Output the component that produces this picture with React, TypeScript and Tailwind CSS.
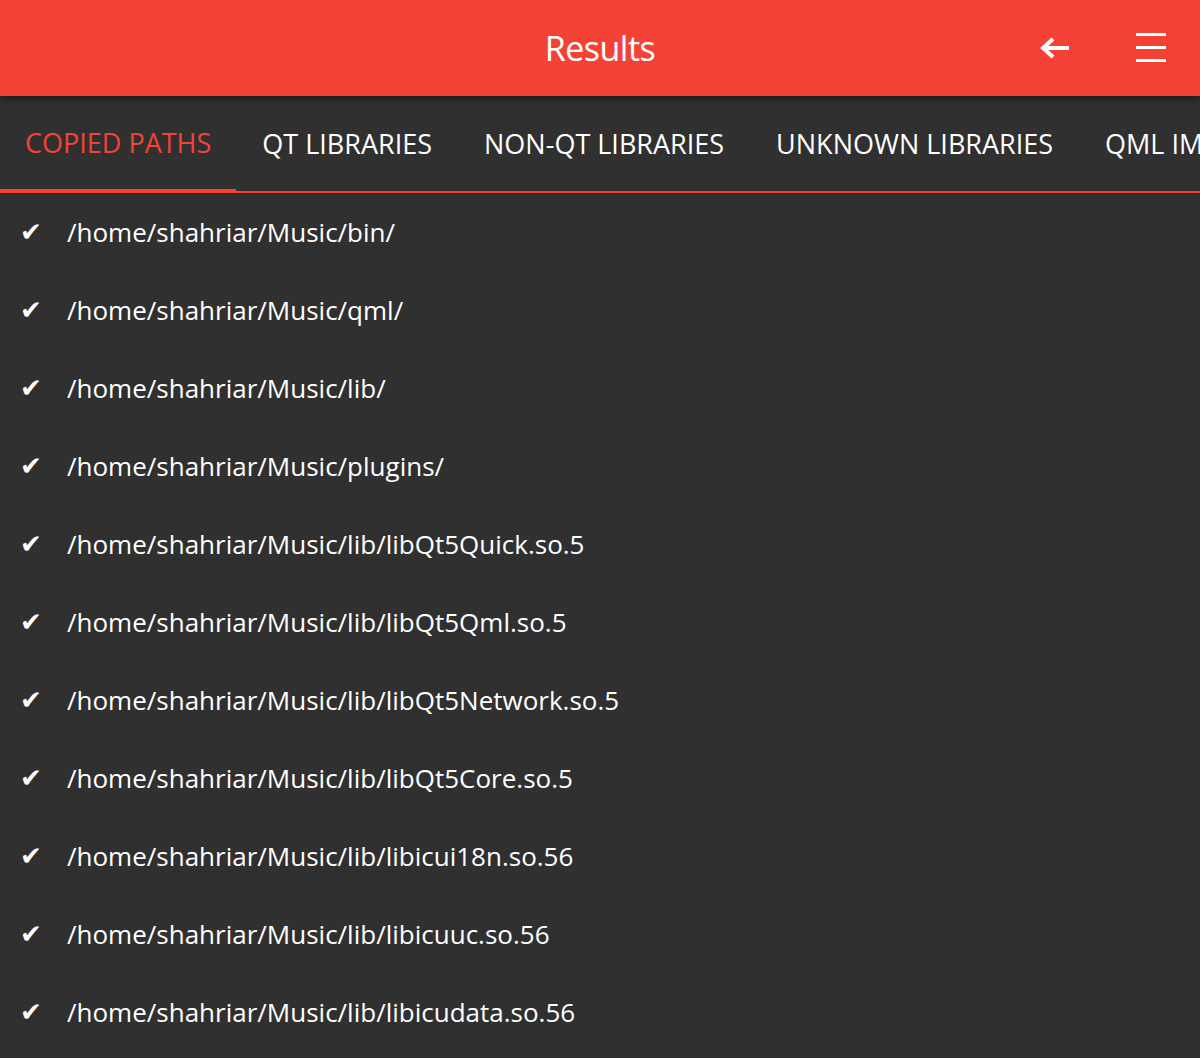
import React from "react";

const paths = [
  "/home/shahriar/Music/bin/",
  "/home/shahriar/Music/qml/",
  "/home/shahriar/Music/lib/",
  "/home/shahriar/Music/plugins/",
  "/home/shahriar/Music/lib/libQt5Quick.so.5",
  "/home/shahriar/Music/lib/libQt5Qml.so.5",
  "/home/shahriar/Music/lib/libQt5Network.so.5",
  "/home/shahriar/Music/lib/libQt5Core.so.5",
  "/home/shahriar/Music/lib/libicui18n.so.56",
  "/home/shahriar/Music/lib/libicuuc.so.56",
  "/home/shahriar/Music/lib/libicudata.so.56",
];

const tabs = ["COPIED PATHS", "QT LIBRARIES", "NON-QT LIBRARIES", "UNKNOWN LIBRARIES", "QML IMPORTS"];

export default function App() {
  return (
    <div className="w-[1200px] h-[1058px] overflow-hidden bg-[#303030] font-['Open_Sans',sans-serif] text-white">
      <header className="relative z-10 h-[96px] bg-[#f44336] flex items-center justify-center shadow-[0_2px_8px_rgba(0,0,0,0.5)]">
        <h1 className="text-[34px] font-normal tracking-[-0.5px]">Results</h1>
        <div className="absolute right-[34px] top-0 h-full flex items-center gap-[66px]">
          <svg width="30" height="22" viewBox="0 0 30 22" fill="none">
            <path d="M29 11H4M13 2L3 11l10 9" stroke="white" strokeWidth="4" />
          </svg>
          <svg width="30" height="30" viewBox="0 0 30 30" fill="white">
            <rect x="0" y="0" width="30" height="3" />
            <rect x="0" y="13" width="30" height="3" />
            <rect x="0" y="26" width="30" height="3" />
          </svg>
        </div>
      </header>
      <nav className="h-[97px] flex border-b-2 border-[#f44336] overflow-hidden whitespace-nowrap">
        {tabs.map((t, i) => (
          <div
            key={t}
            className={
              i === 0
                ? "px-[25px] flex items-center text-[27px] text-[#f44336] border-b-[4px] border-[#f44336] -mb-[2px] pt-[2px] shrink-0"
                : "px-[26px] flex items-center text-[27px] pt-[2px] shrink-0"
            }
          >
            {t}
          </div>
        ))}
      </nav>
      <ul>
        {paths.map((p) => (
          <li key={p} className="h-[78px] flex items-center">
            <span className="w-[67px] pl-[20px] text-[26px] font-['DejaVu_Sans',sans-serif]">✔</span>
            <span className="text-[26px]">{p}</span>
          </li>
        ))}
      </ul>
    </div>
  );
}
